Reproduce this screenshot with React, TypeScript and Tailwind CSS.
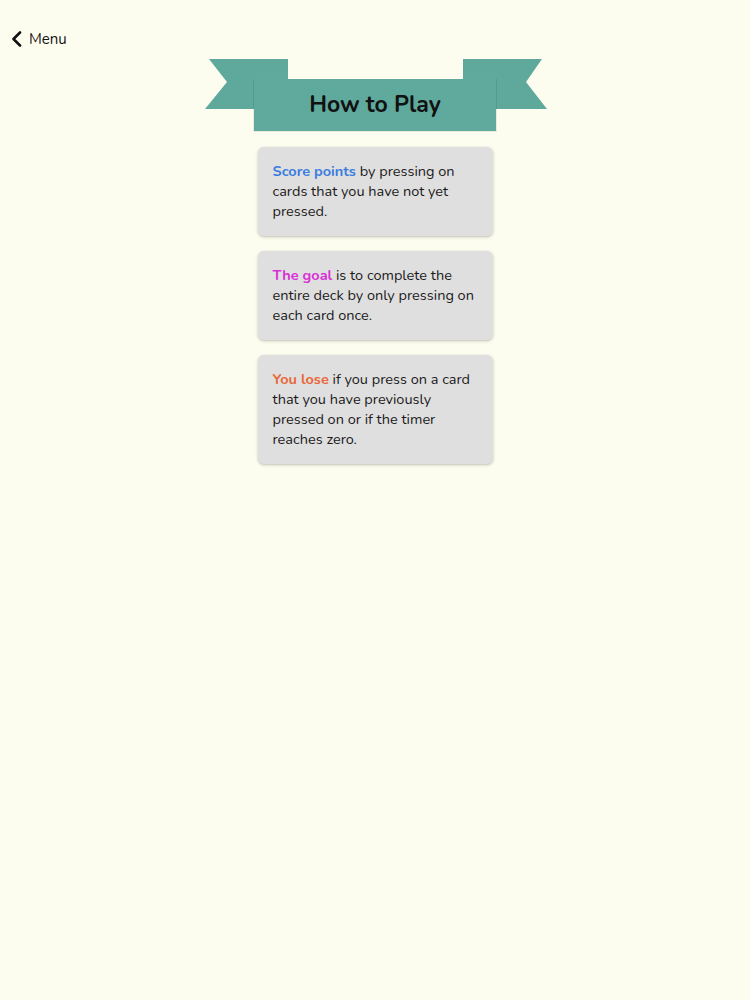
import React from 'react';

const cards = [
  { lead: 'Score points', color: 'text-[#3a7ddf]', rest: ' by pressing on cards that you have not yet pressed.' },
  { lead: 'The goal', color: 'text-[#d92fd9]', rest: ' is to complete the entire deck by only pressing on each card once.' },
  { lead: 'You lose', color: 'text-[#e8683a]', rest: ' if you press on a card that you have previously pressed on or if the timer reaches zero.' },
];

function Banner() {
  return (
    <div className="relative w-[342px] h-[73px]">
      <svg className="absolute inset-0" width="342" height="73" viewBox="0 0 342 73">
        {/* tails */}
        <polygon points="4,0 83,0 83,50 0,50 22,23" fill="#5ea89c" />
        <polygon points="258,0 337,0 321,23 342,50 258,50" fill="#5ea89c" />
        {/* band */}
        <rect x="48" y="20" width="244" height="53" fill="#000" opacity="0.08" />
        <rect x="49" y="20" width="242" height="52" fill="#5fa99d" />
      </svg>
      <div className="absolute left-[49px] top-[20px] w-[242px] h-[52px] flex items-center justify-center">
        <span className="text-[23px] font-bold text-[#111]">How to Play</span>
      </div>
    </div>
  );
}

export default function App() {
  return (
    <div
      className="min-h-[1000px] bg-[#fdfdef] text-[#1a1a1a]"
      style={{ fontFamily: 'Nunito, Lato, "Noto Sans", sans-serif' }}
    >
      <div className="flex items-center gap-[6px] pl-[11px] pt-[30px] h-[48px]">
        <svg width="12" height="16" viewBox="0 0 12 16">
          <path d="M9 1.5 L2.5 8 L9 14.5" stroke="#111" strokeWidth="2.6" fill="none" strokeLinecap="round" strokeLinejoin="round" />
        </svg>
        <span className="text-[15px] text-[#111]">Menu</span>
      </div>
      <div className="flex flex-col items-center pt-[11px]">
        <div className="ml-[2px]">
          <Banner />
        </div>
        <div className="flex flex-col gap-[15px] mt-[15px]">
          {cards.map((c) => (
            <p
              key={c.lead}
              className="w-[235px] rounded-[6px] bg-[#e0dfdf] px-[15px] pt-[14px] pb-[15px] text-[14.5px] leading-[20px] shadow-[0_1px_3px_rgba(0,0,0,0.25)]"
            >
              <b className={`font-bold ${c.color}`}>{c.lead}</b>
              {c.rest}
            </p>
          ))}
        </div>
      </div>
    </div>
  );
}
